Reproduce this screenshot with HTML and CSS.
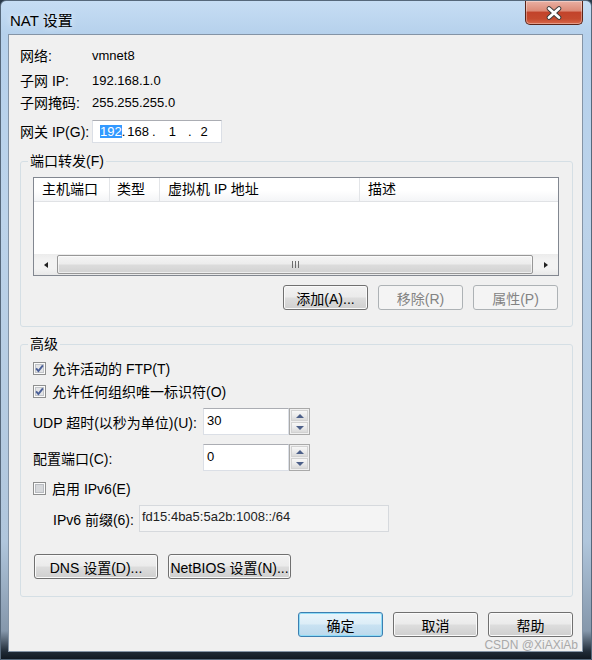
FILE: index.html
```html
<!DOCTYPE html>
<html lang="zh-CN">
<head>
<meta charset="UTF-8">
<title>NAT 设置</title>
<link rel="stylesheet" href="styles.css">
</head>
<body>

<div class="window">
    <div class="titlebar">
        <span class="title">NAT 设置</span>
        <div class="close">
            <svg width="18" height="14" viewBox="0 0 18 14">
                <path d="M4 2.5 L14 11.5 M14 2.5 L4 11.5" stroke="#3b3b3b" stroke-width="4.6" stroke-linecap="round" fill="none"/>
                <path d="M4 2.5 L14 11.5 M14 2.5 L4 11.5" stroke="#ffffff" stroke-width="2.8" stroke-linecap="round" fill="none"/>
            </svg>
        </div>
    </div>

    <div class="client">
        <div class="info">
            <div class="row r1"><span class="lbl">网络:</span><span class="val">vmnet8</span></div>
            <div class="row r2"><span class="lbl">子网 IP:</span><span class="val">192.168.1.0</span></div>
            <div class="row r3"><span class="lbl">子网掩码:</span><span class="val">255.255.255.0</span></div>
            <div class="row gw">
                <span class="lbl">网关 IP(G):</span>
                <div class="ipbox">
                    <span class="sel">192</span><span>.</span><span class="o1">168</span><span class="o2">.</span><span class="o3">1</span><span class="o4">.</span><span class="o5">2</span>
                </div>
            </div>
        </div>

        <fieldset class="group pf">
            <legend>端口转发(F)</legend>
            <div class="listview">
                <div class="lv-head">
                    <div class="col c1">主机端口</div>
                    <div class="col c2">类型</div>
                    <div class="col c3">虚拟机 IP 地址</div>
                    <div class="col c4">描述</div>
                </div>
                <div class="lv-body"></div>
                <div class="hscroll">
                    <div class="arrow aleft"><span class="tri-l"></span></div>
                    <div class="thumb"><span class="grip"></span></div>
                    <div class="arrow aright"><span class="tri-r"></span></div>
                </div>
            </div>
            <div class="btnrow">
                <button class="btn">添加(A)...</button>
                <button class="btn" disabled>移除(R)</button>
                <button class="btn" disabled>属性(P)</button>
            </div>
        </fieldset>

        <fieldset class="group adv">
            <legend>高级</legend>
            <div class="cbrow">
                <svg class="cb" width="13" height="13" viewBox="0 0 13 13"><rect x=".5" y=".5" width="12" height="12" fill="#fbfbfb" stroke="#8e8f8f"/><rect x="2.5" y="2.5" width="8" height="8" fill="#e4e5e7" stroke="#c2c5c9"/><path d="M3.1 6.3 L5.4 9 L9.9 3.3" fill="none" stroke="#4a5f97" stroke-width="1.9"/></svg>
                <span>允许活动的 FTP(T)</span>
            </div>
            <div class="cbrow cb2">
                <svg class="cb" width="13" height="13" viewBox="0 0 13 13"><rect x=".5" y=".5" width="12" height="12" fill="#fbfbfb" stroke="#8e8f8f"/><rect x="2.5" y="2.5" width="8" height="8" fill="#e4e5e7" stroke="#c2c5c9"/><path d="M3.1 6.3 L5.4 9 L9.9 3.3" fill="none" stroke="#4a5f97" stroke-width="1.9"/></svg>
                <span>允许任何组织唯一标识符(O)</span>
            </div>
            <div class="spinrow udp">
                <span class="slbl">UDP 超时(以秒为单位)(U):</span>
                <div class="spin">
                    <div class="field">30</div>
                    <div class="sbtns">
                        <div class="sbtn"><span class="up"></span></div>
                        <div class="sbtn"><span class="down"></span></div>
                    </div>
                </div>
            </div>
            <div class="spinrow cfg">
                <span class="slbl">配置端口(C):</span>
                <div class="spin">
                    <div class="field">0</div>
                    <div class="sbtns">
                        <div class="sbtn"><span class="up"></span></div>
                        <div class="sbtn"><span class="down"></span></div>
                    </div>
                </div>
            </div>
            <div class="cbrow cb3">
                <svg class="cb" width="13" height="13" viewBox="0 0 13 13"><rect x=".5" y=".5" width="12" height="12" fill="#fbfbfb" stroke="#8e8f8f"/><rect x="2.5" y="2.5" width="8" height="8" fill="#d6d8db" stroke="#b9bcc1"/></svg>
                <span>启用 IPv6(E)</span>
            </div>
            <div class="v6row">
                <span class="v6lbl">IPv6 前缀(6):</span>
                <div class="v6box">fd15:4ba5:5a2b:1008::/64</div>
            </div>
            <div class="dnsrow">
                <button class="btn dns">DNS 设置(D)...</button>
                <button class="btn nb">NetBIOS 设置(N)...</button>
            </div>
        </fieldset>

        <div class="dlgbtns">
            <button class="btn def">确定</button>
            <button class="btn">取消</button>
            <button class="btn">帮助</button>
        </div>
    </div>

    <div class="mark">CSDN @XiAXiAb</div>
</div>

</body>
</html>
```

FILE: styles.css
```css
* {
    box-sizing: border-box;
}

body {
    margin: 0;
    width: 592px;
    height: 660px;
    overflow: hidden;
    background: #2b3a4a;
    font-family: "Liberation Sans", "Noto Sans CJK SC", sans-serif;
    font-size: 14px;
    color: #000;
}

/* window frame */
.window {
    position: relative;
    width: 592px;
    height: 660px;
    border: 1px solid #56687b;
    border-radius: 6px 6px 0 0;
    background: linear-gradient(180deg, #c6ddf4 0px, #b6d1ec 33px, #bcd3ea 220px, #b0c6dc 540px, #8597ab 630px, #1e2935 651px, #0d141c 660px);
}

.titlebar {
    height: 33px;
    display: flex;
    justify-content: space-between;
    align-items: flex-start;
}

.title {
    margin: 11px 0 0 9px;
    line-height: 18px;
    font-size: 15px;
    text-shadow: 0 0 6px rgba(255, 255, 255, 0.9);
}

.close {
    width: 58px;
    height: 24px;
    margin-right: 8px;
    border: 1px solid #5b2418;
    border-top: none;
    border-radius: 0 0 5px 5px;
    background: linear-gradient(180deg, #eab0a3 0%, #dc8b78 42%, #c2432a 50%, #c54a2e 78%, #d9694c 100%);
    box-shadow: inset 0 0 0 1px rgba(255, 255, 255, 0.35);
    display: flex;
    justify-content: center;
    align-items: center;
}

.client {
    margin: 0 8px 0 7px;
    width: 575px;
    height: 618px;
    border: 1px solid #8494a6;
    background: #f0f0f0;
}

/* top info */
.info {
    padding-left: 11px;
}

.row {
    display: flex;
    align-items: center;
    height: 20px;
    line-height: 20px;
}

.lbl {
    width: 72px;
}

.val {
    font-size: 13px;
}

.r1 { margin-top: 11px; }
.r2 { margin-top: 5px; }
.r3 { margin-top: 2px; }

.gw {
    margin-top: 7px;
    height: 23px;
}

.ipbox {
    width: 130px;
    height: 23px;
    border: 1px solid #dbdfe6;
    border-top-color: #abadb3;
    background: #fff;
    display: flex;
    align-items: center;
    padding-left: 7px;
    font-size: 13px;
}

.ipbox span {
    line-height: 13px;
}

.ipbox .sel {
    background: #3399ff;
    color: #fff;
}

.o1 { margin-left: 2px; }
.o2 { margin-left: 3px; }
.o3 { margin-left: 13px; }
.o4 { margin-left: 12px; }
.o5 { margin-left: 9px; }

/* group boxes */
.group {
    margin: 9px 9px 0 11px;
    border: 1px solid #d5dfe5;
    border-radius: 3px;
    min-width: 0;
}

.group legend {
    padding: 0 2px;
    margin-left: -5px;
    line-height: 18px;
}

.pf {
    padding: 7px 13px 16px 12px;
}

.adv {
    margin-top: 8px;
    padding: 5px 13px 17px 12px;
}

/* list view */
.listview {
    width: 526px;
    height: 99px;
    border: 1px solid #828790;
    background: #fff;
    display: flex;
    flex-direction: column;
}

.lv-head {
    display: flex;
    height: 24px;
    border-bottom: 1px solid #e0e2e5;
    background: linear-gradient(180deg, #ffffff 0%, #ffffff 55%, #f4f5f7 100%);
}

.col {
    padding-left: 8px;
    line-height: 23px;
    border-right: 1px solid #e3e5e8;
}

.c1 { width: 76px; }
.c2 { width: 50px; padding-left: 7px; }
.c3 { width: 200px; }
.c4 { flex: 1; border-right: none; }

.lv-body {
    flex: 1;
}

.hscroll {
    height: 21px;
    display: flex;
    background: linear-gradient(180deg, #ececec 0%, #f3f3f3 30%, #f3f3f3 70%, #e8e8e8 100%);
}

.arrow {
    display: flex;
    align-items: center;
    justify-content: center;
}

.aleft { width: 23px; }
.aright { width: 25px; }

.tri-l {
    border-top: 3.5px solid transparent;
    border-bottom: 3.5px solid transparent;
    border-right: 4px solid #222;
}

.tri-r {
    border-top: 3.5px solid transparent;
    border-bottom: 3.5px solid transparent;
    border-left: 4px solid #222;
}

.thumb {
    flex: 1;
    margin: 1px 0;
    border: 1px solid #979797;
    border-radius: 2px;
    background: linear-gradient(180deg, #f4f4f4 0%, #ececec 48%, #dcdcdc 52%, #d2d2d2 100%);
    box-shadow: inset 0 0 0 1px rgba(255, 255, 255, 0.6);
    display: flex;
    justify-content: center;
    align-items: center;
}

.grip {
    width: 7px;
    height: 7px;
    background: repeating-linear-gradient(90deg, #6d6d6d 0, #6d6d6d 1px, transparent 1px, transparent 3px);
}

/* buttons */
.btn {
    width: 85px;
    height: 25px;
    padding: 0;
    border: 1px solid #707070;
    border-radius: 3px;
    background: linear-gradient(180deg, #f2f2f2 0%, #ebebeb 48%, #dddddd 52%, #cfcfcf 100%);
    box-shadow: inset 0 0 0 1px #fafafa;
    font-family: "Liberation Sans", "Noto Sans CJK SC", sans-serif;
    font-size: 14px;
    color: #000;
}

.btn:disabled {
    border-color: #adb2b5;
    background: #f4f4f4;
    box-shadow: none;
    color: #838383;
}

.btn.def {
    border-color: #3c7fb1;
    background: linear-gradient(180deg, #eaf5fb 0%, #dcedf7 48%, #c9e2f2 52%, #bcd9ec 100%);
    box-shadow: inset 0 0 0 1px #8fdcf7;
}

.btnrow {
    display: flex;
    justify-content: flex-end;
    gap: 10px;
    margin-top: 9px;
    padding-right: 1px;
}

/* advanced */
.cbrow {
    display: flex;
    align-items: center;
    gap: 6px;
    height: 20px;
}

.cb2 { margin-top: 3px; }
.cb3 { margin-top: 7px; }

.spinrow {
    display: flex;
    align-items: center;
    height: 27px;
}

.udp { margin-top: 7px; }
.cfg { margin-top: 9px; }

.slbl {
    width: 170px;
}

.spin {
    width: 107px;
    height: 27px;
    display: flex;
}

.field {
    flex: 1;
    border: 1px solid #dbdfe6;
    border-top-color: #abadb3;
    background: #fff;
    padding: 4px 0 0 3px;
    font-size: 13px;
    line-height: 15px;
}

.sbtns {
    width: 21px;
    border: 1px solid #a9a9a9;
    background: #f0f0f0;
    padding: 1px;
    display: flex;
    flex-direction: column;
    gap: 1px;
}

.sbtn {
    flex: 1;
    border: 1px solid #d2d2d2;
    background: linear-gradient(180deg, #f7f7f7 0%, #ebebeb 50%, #dadada 100%);
    display: flex;
    justify-content: center;
    align-items: center;
}

.up {
    border-left: 4px solid transparent;
    border-right: 4px solid transparent;
    border-bottom: 4px solid #4d6089;
}

.down {
    border-left: 4px solid transparent;
    border-right: 4px solid transparent;
    border-top: 4px solid #4d6089;
}

.v6row {
    display: flex;
    align-items: center;
    height: 27px;
    margin-top: 7px;
    padding-left: 20px;
}

.v6lbl {
    width: 86px;
}

.v6box {
    width: 250px;
    height: 27px;
    border: 1px solid #d6d9dd;
    background: #f4f4f4;
    padding: 3px 0 0 2px;
    font-size: 13px;
    line-height: 15px;
    color: #222;
}

.dnsrow {
    display: flex;
    gap: 10px;
    margin: 22px 0 0 1px;
}

.dns { width: 124px; }
.nb { width: 123px; }

.dlgbtns {
    display: flex;
    justify-content: flex-end;
    gap: 10px;
    margin: 15px 9px 0 0;
}

.mark {
    position: absolute;
    right: 13px;
    top: 637px;
    font-size: 12px;
    line-height: 14px;
    color: #a9a9a9;
}
```
